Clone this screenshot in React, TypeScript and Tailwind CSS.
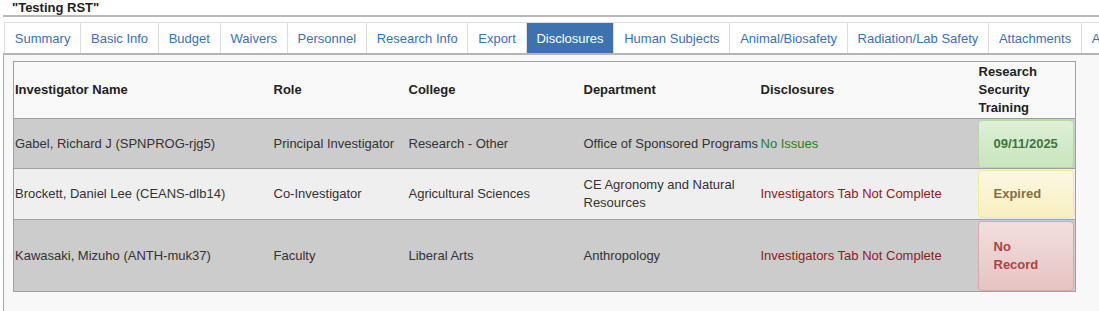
const tabs = [
  "Summary",
  "Basic Info",
  "Budget",
  "Waivers",
  "Personnel",
  "Research Info",
  "Export",
  "Disclosures",
  "Human Subjects",
  "Animal/Biosafety",
  "Radiation/Lab Safety",
  "Attachments",
  "Approvals",
];

type Status = "ok" | "expired" | "none";

const rows: {
  name: string;
  role: string;
  college: string;
  dept: string;
  disclosure: string;
  clear: boolean;
  training: string;
  status: Status;
  shade: string;
}[] = [
  {
    name: "Gabel, Richard J (SPNPROG-rjg5)",
    role: "Principal Investigator",
    college: "Research - Other",
    dept: "Office of Sponsored Programs",
    disclosure: "No Issues",
    clear: true,
    training: "09/11/2025",
    status: "ok",
    shade: "bg-[#cccccc]",
  },
  {
    name: "Brockett, Daniel Lee (CEANS-dlb14)",
    role: "Co-Investigator",
    college: "Agricultural Sciences",
    dept: "CE Agronomy and Natural Resources",
    disclosure: "Investigators Tab Not Complete",
    clear: false,
    training: "Expired",
    status: "expired",
    shade: "bg-[#efefef]",
  },
  {
    name: "Kawasaki, Mizuho (ANTH-muk37)",
    role: "Faculty",
    college: "Liberal Arts",
    dept: "Anthropology",
    disclosure: "Investigators Tab Not Complete",
    clear: false,
    training: "No Record",
    status: "none",
    shade: "bg-[#cccccc]",
  },
];

const badge: Record<Status, string> = {
  ok: "bg-gradient-to-b from-[#dff0d8] to-[#c8e5bc] border-[#b2dba1] text-[#3c763d]",
  expired: "bg-gradient-to-b from-[#fcf8e3] to-[#f8efc0] border-[#f5e79e] text-[#8a6d3b]",
  none: "bg-gradient-to-b from-[#f2dede] to-[#e7c3c3] border-[#dca7a7] text-[#a94442]",
};

const App = () => {
  return (
    <div className="w-[1099px] h-[311px] overflow-hidden bg-white flex flex-col font-['Liberation_Sans',Arial,sans-serif] text-[13px] text-[#333]">
      <div className="pl-[12px] h-[15px] leading-[15px] font-bold text-[#222]">"Testing RST"</div>
      <div className="ml-[3px] h-[2px] bg-[#b8b8b8]" />

      <div className="ml-[4px] mt-[5px] flex h-[31px] overflow-hidden">
        {tabs.map((t, i) => (
          <div
            key={t}
            className={`shrink-0 whitespace-nowrap px-[9.8px] pt-[1px] flex items-center border-t border-r border-[#dddddd] ${
              i === 0 ? "border-l" : ""
            } ${t === "Disclosures" ? "bg-[#3e72ae] text-white border-[#3e72ae]" : "bg-white text-[#3a70b4]"}`}
          >
            {t}
          </div>
        ))}
      </div>
      <div className="ml-[3px] h-[2px] bg-[#b5b5b5]" />

      <div className="ml-[3px] flex-1 border-l border-[#aaaaaa] bg-[#f8f8f8] pt-[6px] pl-[9px]">
        <table className="table-fixed border-collapse border border-[#a0a0a0] w-[1062px] leading-[18px]">
          <colgroup>
            <col className="w-[259px]" />
            <col className="w-[135px]" />
            <col className="w-[175px]" />
            <col className="w-[177px]" />
            <col className="w-[218px]" />
            <col className="w-[98px]" />
          </colgroup>
          <thead>
            <tr className="bg-[#f9f9f9] text-[#222] font-bold text-left border-b border-[#a0a0a0]">
              <th className="px-[1px] py-[1px] align-middle">Investigator Name</th>
              <th className="px-[1px] py-[1px] align-middle">Role</th>
              <th className="px-[1px] py-[1px] align-middle">College</th>
              <th className="px-[1px] py-[1px] align-middle">Department</th>
              <th className="px-[1px] py-[1px] align-middle">Disclosures</th>
              <th className="px-[1px] py-[1px] align-middle">Research Security Training</th>
            </tr>
          </thead>
          <tbody>
            {rows.map((r) => (
              <tr key={r.name} className={`${r.shade} border-b border-[#a0a0a0]`}>
                <td className="px-[1px] py-[7px] align-middle">{r.name}</td>
                <td className="px-[1px] py-[7px] align-middle">{r.role}</td>
                <td className="px-[1px] py-[7px] align-middle">{r.college}</td>
                <td className="px-[1px] py-[7px] align-middle">{r.dept}</td>
                <td
                  className={`px-[1px] py-[7px] align-middle ${
                    r.clear ? "text-[#2f7a22]" : "text-[#8b1c1c]"
                  }`}
                >
                  {r.disclosure}
                </td>
                <td className="px-0 py-[0.5px] align-middle">
                  <div
                    className={`w-[96px] rounded-[4px] border px-[15px] font-bold ${
                      r.status === "none" ? "py-[16px]" : "py-[14px]"
                    } ${badge[r.status]}`}
                  >
                    {r.training}
                  </div>
                </td>
              </tr>
            ))}
          </tbody>
        </table>
      </div>
    </div>
  );
};

export default App;
